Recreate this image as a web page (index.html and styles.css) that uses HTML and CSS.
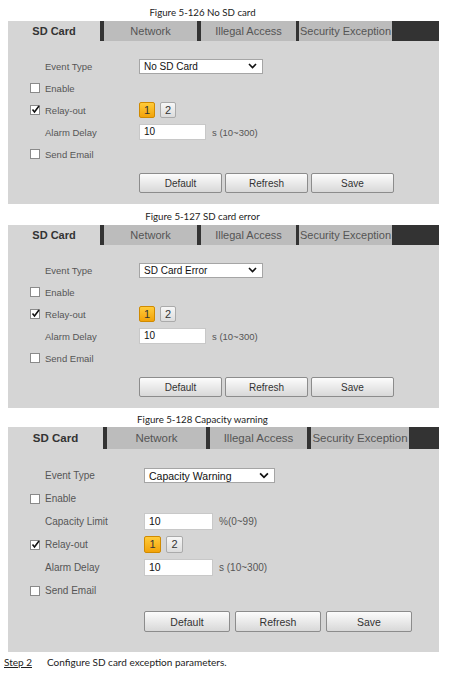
FILE: index.html
```html
<!DOCTYPE html>
<html lang="en">
<head>
    <meta charset="UTF-8">
    <title>SD Card Exception</title>
    <link rel="stylesheet" href="styles.css">
</head>
<body>
    <div class="doc">
        <!-- Figure 5-126 -->
        <p class="caption">Figure 5-126 No SD card</p>
        <div class="panel">
            <div class="tabs">
                <div class="tab active">SD Card</div>
                <div class="tab">Network</div>
                <div class="tab">Illegal Access</div>
                <div class="tab">Security Exception</div>
            </div>
            <div class="form">
                <div class="row">
                    <span class="check-cell"></span>
                    <span class="label">Event Type</span>
                    <div class="select">No SD Card <svg width="9" height="6" viewBox="0 0 9 6"><polyline points="1,1 4.5,4.6 8,1" fill="none" stroke="#111" stroke-width="1.6"/></svg></div>
                </div>
                <div class="row">
                    <span class="check-cell"><span class="box"></span></span>
                    <span class="label">Enable</span>
                </div>
                <div class="row">
                    <span class="check-cell"><span class="box"><svg width="9" height="9" viewBox="0 0 9 9"><polyline points="1.5,4.5 3.5,7 8,1" fill="none" stroke="#111" stroke-width="1.6"/></svg></span></span>
                    <span class="label">Relay-out</span>
                    <div class="relay"><span class="on">1</span><span>2</span></div>
                </div>
                <div class="row">
                    <span class="check-cell"></span>
                    <span class="label">Alarm Delay</span>
                    <div class="input">10</div>
                    <span class="unit">s (10~300)</span>
                </div>
                <div class="row">
                    <span class="check-cell"><span class="box"></span></span>
                    <span class="label">Send Email</span>
                </div>
                <div class="actions">
                    <button class="btn">Default</button>
                    <button class="btn">Refresh</button>
                    <button class="btn">Save</button>
                </div>
            </div>
        </div>

        <!-- Figure 5-127 -->
        <p class="caption">Figure 5-127 SD card error</p>
        <div class="panel">
            <div class="tabs">
                <div class="tab active">SD Card</div>
                <div class="tab">Network</div>
                <div class="tab">Illegal Access</div>
                <div class="tab">Security Exception</div>
            </div>
            <div class="form">
                <div class="row">
                    <span class="check-cell"></span>
                    <span class="label">Event Type</span>
                    <div class="select">SD Card Error <svg width="9" height="6" viewBox="0 0 9 6"><polyline points="1,1 4.5,4.6 8,1" fill="none" stroke="#111" stroke-width="1.6"/></svg></div>
                </div>
                <div class="row">
                    <span class="check-cell"><span class="box"></span></span>
                    <span class="label">Enable</span>
                </div>
                <div class="row">
                    <span class="check-cell"><span class="box"><svg width="9" height="9" viewBox="0 0 9 9"><polyline points="1.5,4.5 3.5,7 8,1" fill="none" stroke="#111" stroke-width="1.6"/></svg></span></span>
                    <span class="label">Relay-out</span>
                    <div class="relay"><span class="on">1</span><span>2</span></div>
                </div>
                <div class="row">
                    <span class="check-cell"></span>
                    <span class="label">Alarm Delay</span>
                    <div class="input">10</div>
                    <span class="unit">s (10~300)</span>
                </div>
                <div class="row">
                    <span class="check-cell"><span class="box"></span></span>
                    <span class="label">Send Email</span>
                </div>
                <div class="actions">
                    <button class="btn">Default</button>
                    <button class="btn">Refresh</button>
                    <button class="btn">Save</button>
                </div>
            </div>
        </div>

        <!-- Figure 5-128 -->
        <p class="caption tight">Figure 5-128 Capacity warning</p>
        <div class="panel big">
            <div class="tabs">
                <div class="tab active">SD Card</div>
                <div class="tab">Network</div>
                <div class="tab">Illegal Access</div>
                <div class="tab">Security Exception</div>
            </div>
            <div class="form">
                <div class="row">
                    <span class="check-cell"></span>
                    <span class="label">Event Type</span>
                    <div class="select">Capacity Warning <svg width="10" height="7" viewBox="0 0 9 6"><polyline points="1,1 4.5,4.6 8,1" fill="none" stroke="#111" stroke-width="1.6"/></svg></div>
                </div>
                <div class="row">
                    <span class="check-cell"><span class="box"></span></span>
                    <span class="label">Enable</span>
                </div>
                <div class="row">
                    <span class="check-cell"></span>
                    <span class="label">Capacity Limit</span>
                    <div class="input">10</div>
                    <span class="unit">%(0~99)</span>
                </div>
                <div class="row">
                    <span class="check-cell"><span class="box"><svg width="9" height="9" viewBox="0 0 9 9"><polyline points="1.5,4.5 3.5,7 8,1" fill="none" stroke="#111" stroke-width="1.6"/></svg></span></span>
                    <span class="label">Relay-out</span>
                    <div class="relay"><span class="on">1</span><span>2</span></div>
                </div>
                <div class="row">
                    <span class="check-cell"></span>
                    <span class="label">Alarm Delay</span>
                    <div class="input">10</div>
                    <span class="unit">s (10~300)</span>
                </div>
                <div class="row">
                    <span class="check-cell"><span class="box"></span></span>
                    <span class="label">Send Email</span>
                </div>
                <div class="actions">
                    <button class="btn">Default</button>
                    <button class="btn">Refresh</button>
                    <button class="btn">Save</button>
                </div>
            </div>
        </div>
    </div>

    <p class="step"><span class="step-no">Step 2</span>Configure SD card exception parameters.</p>
</body>
</html>
```

FILE: styles.css
```css
body {
    margin: 0;
    background: #fff;
    font-family: "Liberation Sans", Arial, sans-serif;
}

.doc {
    padding: 0 12px 0 8px;
}

.caption {
    margin: 0;
    padding: 6px 42px 3px 0;
    font: 9.7px/12px Lato, sans-serif;
    color: #222;
    text-align: center;
}

.caption.tight {
    padding-top: 5px;
    padding-bottom: 2px;
}

.panel {
    background: #d5d5d5;
}

/* tab strip */
.tabs {
    display: flex;
    height: 20px;
    background: #333;
}

.tab {
    width: 93px;
    margin-right: 4px;
    background: #bcbcbc;
    color: #555;
    font-size: 11px;
    line-height: 20px;
    text-align: center;
    white-space: nowrap;
    overflow: hidden;
}

.tab:nth-child(3) {
    width: 95px;
    margin-right: 3px;
}

.tab.active {
    width: 92px;
    background: #d5d5d5;
    color: #333;
    font-weight: bold;
}

/* form rows */
.form {
    padding: 14px 0 11px 22px;
}

.row {
    display: flex;
    align-items: center;
    height: 22px;
    font-size: 9.5px;
    color: #555;
}

.check-cell {
    width: 15px;
    flex-shrink: 0;
}

.box {
    display: block;
    width: 10px;
    height: 10px;
    box-sizing: border-box;
    border: 1px solid #8a8a8a;
    background: #fff;
}

.box svg {
    display: block;
    margin: -1px 0 0 0;
}

.label {
    width: 94px;
    flex-shrink: 0;
}

.select {
    display: flex;
    align-items: center;
    justify-content: space-between;
    width: 124px;
    height: 15px;
    box-sizing: border-box;
    padding: 0 5px 0 4px;
    border: 1px solid #a5a5a5;
    background: #fff;
    color: #111;
    font-size: 10px;
}

.input {
    width: 67px;
    height: 16px;
    box-sizing: border-box;
    padding-left: 4px;
    border: 1px solid #c8c8c8;
    background: #fff;
    color: #111;
    font-size: 10px;
    line-height: 14px;
}

.unit {
    margin-left: 6px;
}

.relay {
    display: flex;
    gap: 5px;
}

.relay span {
    width: 16px;
    height: 16px;
    box-sizing: border-box;
    border: 1px solid #aaa;
    border-radius: 2px;
    background: linear-gradient(#f7f7f7, #dcdcdc);
    color: #333;
    font-size: 11px;
    line-height: 14px;
    text-align: center;
}

.relay .on {
    border-color: #d08a00;
    background: linear-gradient(#ffcb3a, #f2a30a);
}

.actions {
    display: flex;
    gap: 3px;
    margin: 8px 0 0 109px;
}

.btn {
    width: 83px;
    height: 20px;
    padding: 0;
    border: 1px solid #8c8c8c;
    border-radius: 2px;
    background: linear-gradient(#fcfcfc, #d8d8d8);
    color: #333;
    font: 10px "Liberation Sans", Arial, sans-serif;
}

/* third figure is captured slightly larger */
.big .tabs {
    height: 22px;
}

.big .tab {
    width: 99px;
    margin-right: 4px;
    font-size: 11.5px;
    line-height: 22px;
}

.big .tab:nth-child(3) {
    width: 97px;
    margin-right: 4px;
}

.big .tab:nth-child(4) {
    width: 98px;
}

.big .tab.active {
    width: 95px;
}

.big .form {
    padding: 15px 0 20px 22px;
}

.big .row {
    height: 23px;
    font-size: 10px;
}

.big .label {
    width: 99px;
}

.big .select {
    width: 131px;
    font-size: 10.5px;
}

.big .input {
    width: 69px;
    height: 17px;
    font-size: 10.5px;
    line-height: 15px;
}

.big .relay span {
    width: 17px;
    height: 17px;
    line-height: 15px;
}

.big .actions {
    gap: 5px;
    margin: 9px 0 0 114px;
}

.big .btn {
    width: 86px;
    height: 21px;
    font-size: 10.5px;
}

.step {
    margin: 0;
    padding: 4px 0 0 4px;
    font: 10px/12px Lato, sans-serif;
    color: #222;
}

.step-no {
    display: inline-block;
    width: 43px;
    text-decoration: underline;
}
```
